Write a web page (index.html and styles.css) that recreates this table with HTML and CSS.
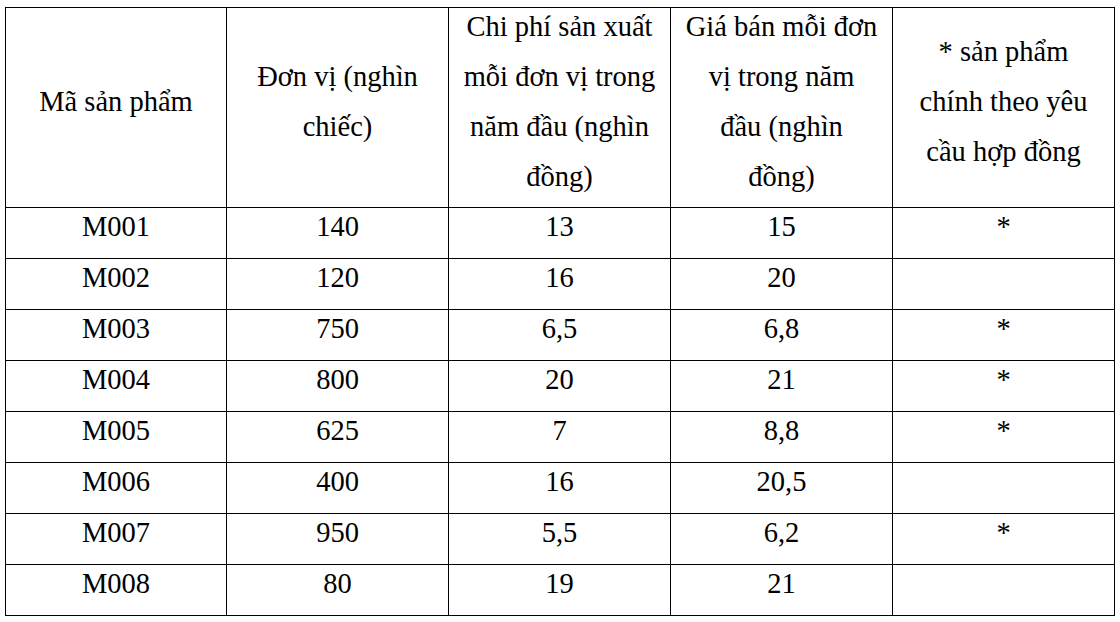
FILE: index.html
```html
<!DOCTYPE html>
<html lang="vi">
<head>
<meta charset="utf-8">
<link rel="stylesheet" href="styles.css">
</head>
<body>
<table class="tbl">
  <colgroup>
    <col class="c1"><col class="c2"><col class="c3"><col class="c4"><col class="c5">
  </colgroup>
  <thead>
    <tr class="head">
      <th><div class="h">Mã sản phẩm</div></th>
      <th><div class="h">Đơn vị (nghìn<br>chiếc)</div></th>
      <th><div class="h">Chi phí sản xuất<br>mỗi đơn vị trong<br>năm đầu (nghìn<br>đồng)</div></th>
      <th><div class="h">Giá bán mỗi đơn<br>vị trong năm<br>đầu (nghìn<br>đồng)</div></th>
      <th><div class="h">* sản phẩm<br>chính theo yêu<br>cầu hợp đồng</div></th>
    </tr>
  </thead>
  <tbody>
    <tr><td><div class="t">M001</div></td><td><div class="t">140</div></td><td><div class="t">13</div></td><td><div class="t">15</div></td><td><div class="t">*</div></td></tr>
    <tr><td><div class="t">M002</div></td><td><div class="t">120</div></td><td><div class="t">16</div></td><td><div class="t">20</div></td><td><div class="t"></div></td></tr>
    <tr><td><div class="t">M003</div></td><td><div class="t">750</div></td><td><div class="t">6,5</div></td><td><div class="t">6,8</div></td><td><div class="t">*</div></td></tr>
    <tr><td><div class="t">M004</div></td><td><div class="t">800</div></td><td><div class="t">20</div></td><td><div class="t">21</div></td><td><div class="t">*</div></td></tr>
    <tr><td><div class="t">M005</div></td><td><div class="t">625</div></td><td><div class="t">7</div></td><td><div class="t">8,8</div></td><td><div class="t">*</div></td></tr>
    <tr><td><div class="t">M006</div></td><td><div class="t">400</div></td><td><div class="t">16</div></td><td><div class="t">20,5</div></td><td><div class="t"></div></td></tr>
    <tr><td><div class="t">M007</div></td><td><div class="t">950</div></td><td><div class="t">5,5</div></td><td><div class="t">6,2</div></td><td><div class="t">*</div></td></tr>
    <tr><td><div class="t">M008</div></td><td><div class="t">80</div></td><td><div class="t">19</div></td><td><div class="t">21</div></td><td><div class="t"></div></td></tr>
  </tbody>
</table>
</body>
</html>
```
FILE: styles.css
```css
html, body {
  margin: 0;
  padding: 0;
  background: #ffffff;
}
body {
  padding: 7px 0 0 5px;
  font-family: "Liberation Serif", "Times New Roman", serif;
  color: #000000;
}
.tbl {
  border-collapse: collapse;
  table-layout: fixed;
  width: 1110px;
  font-size: 28.5px;
  line-height: 50px;
}
.c1 { width: 221px; }
.c2, .c3, .c4, .c5 { width: 222px; }
.tbl th, .tbl td {
  border: 1px solid #000000;
  padding: 0;
  text-align: center;
  font-weight: normal;
  vertical-align: top;
}
.tbl .head th {
  height: 199px;
  vertical-align: middle;
}
.h {
  margin: -6px 0 5px;
  white-space: nowrap;
}
.t {
  margin: -6px 0 6px;
  min-height: 50px;
  white-space: nowrap;
}
```
